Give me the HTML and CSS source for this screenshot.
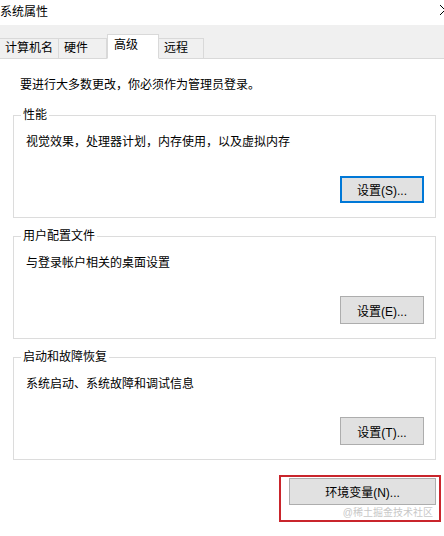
FILE: index.html
```html
<!DOCTYPE html>
<html lang="zh-CN">
  <head>
    <meta charset="UTF-8" />
    <title>系统属性</title>
    <link rel="stylesheet" href="styles.css">
  </head>
  <body>
    <header class="titlebar">
      <span class="title">系统属性</span>
      <svg class="close" width="10" height="10" viewBox="0 0 10 10">
        <path d="M0 0 L10 10 M10 0 L0 10" stroke="#000" stroke-width="1" fill="none" />
      </svg>
    </header>

    <nav class="tabs">
      <div class="tab tab-name">计算机名</div>
      <div class="tab tab-hw">硬件</div>
      <div class="tab tab-adv active">高级</div>
      <div class="tab tab-remote">远程</div>
    </nav>

    <main class="content">
      <p class="intro">要进行大多数更改，你必须作为管理员登录。</p>

      <section class="group">
        <span class="group-title">性能</span>
        <p>视觉效果，处理器计划，内存使用，以及虚拟内存</p>
        <button class="btn focused">设置(S)...</button>
      </section>

      <section class="group">
        <span class="group-title">用户配置文件</span>
        <p>与登录帐户相关的桌面设置</p>
        <button class="btn">设置(E)...</button>
      </section>

      <section class="group">
        <span class="group-title">启动和故障恢复</span>
        <p>系统启动、系统故障和调试信息</p>
        <button class="btn">设置(T)...</button>
      </section>

      <div class="env-row">
        <div class="highlight">
          <button class="btn btn-env">环境变量(N)...</button>
          <span class="watermark">@稀土掘金技术社区</span>
        </div>
      </div>
    </main>
  </body>
</html>
```

FILE: styles.css
```css
html, body {
  margin: 0;
  background: white;
  overflow: hidden;
}

body {
  width: 444px;
  height: 536px;
  font-family: "Liberation Sans", "Noto Sans CJK SC", sans-serif;
  font-size: 12px;
  color: #000;
}

.titlebar {
  height: 25px;
  display: flex;
  justify-content: space-between;
  align-items: center;
  background: white;
}

.title {
  margin-left: 0;
  line-height: 16px;
  margin-top: -2px;
}

.close {
  margin-right: -6px;
  margin-top: -6px;
}

.tabs {
  height: 33px;
  background: #f0f0f0;
  border-bottom: 1px solid #d9d9d9;
  display: flex;
  align-items: flex-end;
}

.tab {
  box-sizing: border-box;
  height: 21px;
  margin-bottom: -1px;
  border: 1px solid #d9d9d9;
  background: #f0f0f0;
  padding-left: 5px;
  line-height: 18px;
}

.tab-name {
  width: 59px;
  border-left: none;
}

.tab-hw {
  width: 48px;
  border-left: none;
}

.tab-adv {
  width: 52px;
}

.tab-remote {
  width: 45px;
  border-left: none;
}

.tab.active {
  height: 25px;
  background: white;
  border-bottom-color: white;
  padding-left: 6px;
  line-height: 20px;
}

.content {
  padding: 0 8px 0 13px;
}

.intro {
  margin: 18px 0 22px 7px;
  line-height: 16px;
}

.group {
  position: relative;
  box-sizing: border-box;
  height: 103px;
  margin-bottom: 18px;
  border: 1px solid #dcdcdc;
  padding: 18px 11px 14px 12px;
  display: flex;
  flex-direction: column;
  align-items: flex-start;
}

.group-title {
  position: absolute;
  top: -9px;
  left: 7px;
  padding: 0 2px;
  background: white;
  line-height: 16px;
}

.group p {
  margin: 0;
  line-height: 16px;
}

.btn {
  box-sizing: border-box;
  width: 84px;
  height: 28px;
  margin-top: auto;
  align-self: flex-end;
  background: #e1e1e1;
  border: 1px solid #adadad;
  font-family: inherit;
  font-size: 12px;
  color: #000;
  padding: 0;
}

.btn.focused {
  height: 27px;
  border: 2px solid #0078d7;
}

.env-row {
  display: flex;
  justify-content: flex-end;
  margin-top: -3px;
  margin-right: -5px;
}

.highlight {
  box-sizing: border-box;
  width: 162px;
  height: 47px;
  border: 2px solid #c9252c;
  padding: 1px 3px 0 8px;
  display: flex;
  flex-direction: column;
  align-items: flex-end;
}

.btn-env {
  width: 147px;
  height: 28px;
  margin-top: 0;
}

.watermark {
  margin-top: 1px;
  margin-right: 3px;
  font-size: 10px;
  line-height: 14px;
  color: #c8c8c8;
}
```
